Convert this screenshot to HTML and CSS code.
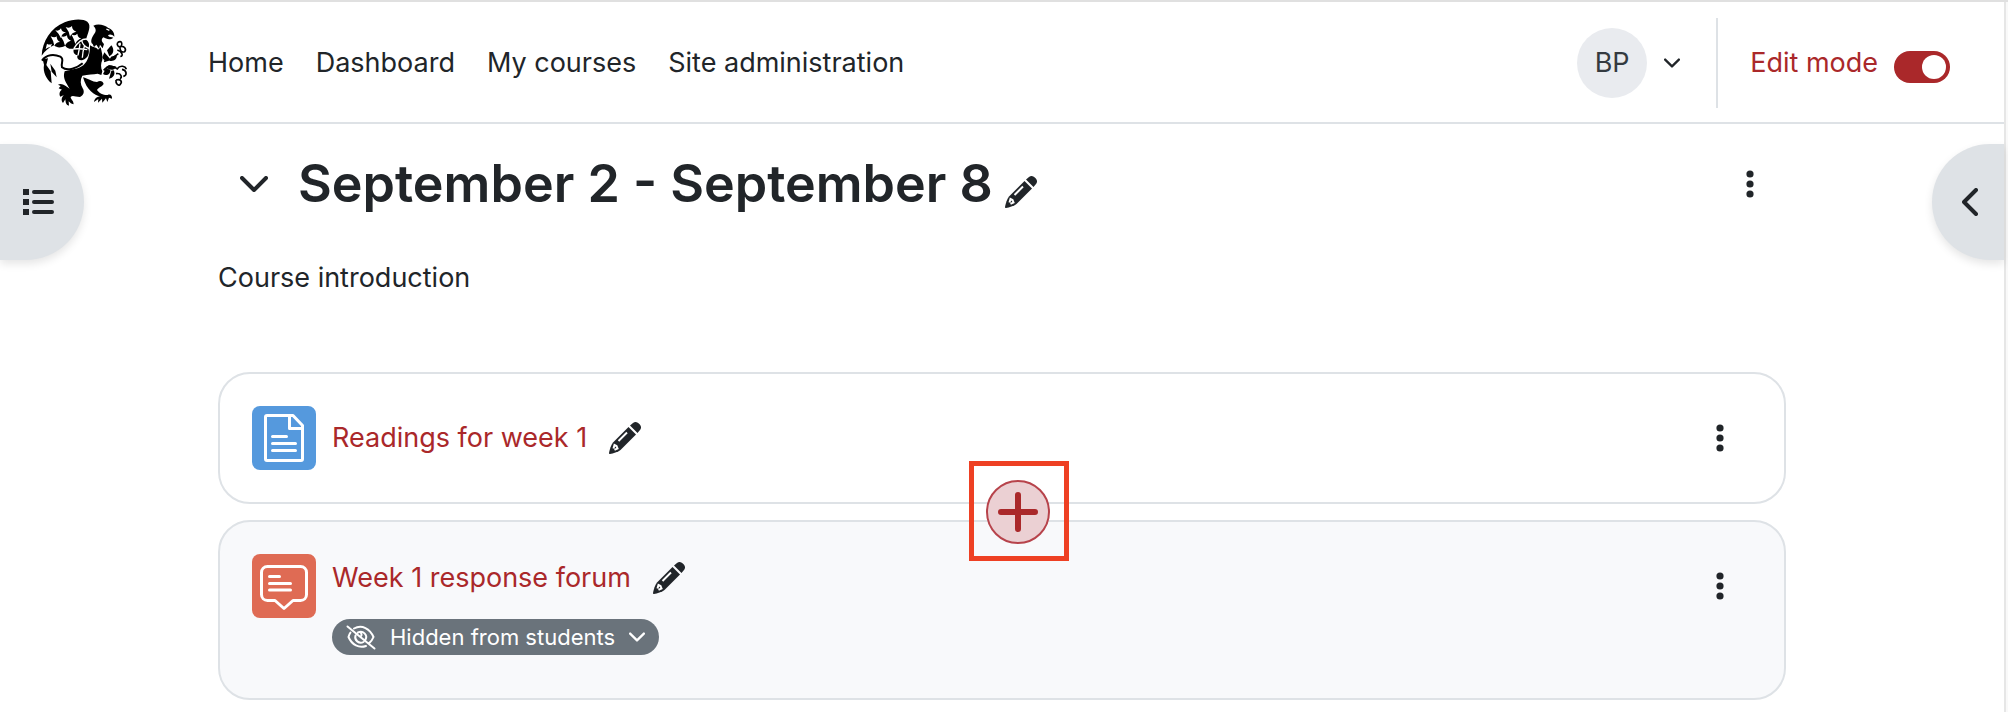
FILE: index.html
```html
<!DOCTYPE html>
<html lang="en">
<head>
    <meta charset="UTF-8">
    <meta name="viewport" content="width=device-width, initial-scale=1.0">
    <title>Course</title>
    <link rel="stylesheet" href="styles.css">
</head>
<body>
    <!-- shared icons -->
    <svg class="sprite" aria-hidden="true">
        <symbol id="pencil" viewBox="0 0 32 32">
            <path d="M19.500 5L27 12.500L11.500 28C9 30 4 31.500 1 32C.300 32 0 31.700 0 31C.500 28 2 23 4 20.500Z"/>
            <path d="M21 3.500L24 1C26 -.500 28 -.300 29.800 1.500L30.800 2.500C32.500 4.300 32.300 6.500 31 8L28.500 11Z"/>
            <path class="cut" d="M9.500 19L18 10.500M4.500 26.500L5.500 23L7.500 24L8.500 26.500L5.500 27.800"/>
        </symbol>
        <symbol id="kebab" viewBox="0 0 8 28">
            <circle cx="4" cy="4" r="3.600"/>
            <circle cx="4" cy="14" r="3.600"/>
            <circle cx="4" cy="24" r="3.600"/>
        </symbol>
        <symbol id="chevron" viewBox="0 0 28 16">
            <path d="M2 2L14 14L26 2"/>
        </symbol>
    </svg>

    <div class="page">
        <header class="header">
            <a class="logo" href="#" aria-label="Home page">
                <svg viewBox="0 0 330 315">
                    <path d="M35 134C37 92 62 50 104 34C132 23 160 24 172 32C186 44 173 66 168 86C178 92 180 104 174 112C181 124 174 143 158 147C145 150 139 140 143 132C132 132 128 121 132 113C119 115 109 111 106 104C93 111 81 111 72 103C57 109 45 120 35 134Z"/>
                    <path d="M190 44C205 37 224 42 235 51C246 54 254 65 253 77C247 70 238 69 234 73C236 79 245 79 250 80C240 89 228 84 221 79C213 83 214 92 222 99L218 112L210 101L207 113L199 101L192 108L188 99C179 94 186 78 194 67C201 57 195 49 190 44Z"/>
                    <path d="M180 103C191 111 200 108 204 116L212 109C215 123 219 134 217 147C212 157 212 170 217 181L214 192L203 188C190 190 175 190 157 194C150 207 151 220 158 232C165 243 160 254 150 258C136 258 128 252 122 258C122 266 130 266 131 280C123 279 121 275 116 271L117 284C108 283 107 275 106 265L99 276C92 268 95 258 102 252L91 257C86 249 89 240 96 236L86 232L92 225L84 221C96 214 109 226 119 233C108 215 97 201 104 181C121 176 145 175 160 163C174 151 180 130 180 103Z"/>
                    <path d="M159 199C174 203 188 213 201 213C211 207 219 211 221 219C217 226 204 231 201 237C207 247 222 253 233 252C241 248 247 254 246 263L237 260L232 273L228 262L217 275L216 263L204 275L205 264L192 273C194 261 202 257 210 256C194 253 170 239 159 199Z"/>
                    <path class="stroke" d="M36 149C49 130 72 129 91 137C105 145 91 157 96 169C112 182 142 171 158 157"/>
                    <path d="M38 145L54 142L49 162L62 181L65 217C49 204 38 183 42 161ZM61 158L76 179L80 199L65 182Z"/>
                    <path d="M244 103C254 116 251 129 238 136L231 118ZM223 124L240 143C231 151 219 150 217 139ZM243 137L260 132C263 144 250 153 238 149ZM237 162L259 167C250 182 235 176 228 168ZM228 171L219 189C230 198 243 187 241 177ZM244 179L237 203C249 202 258 190 251 178Z"/>
                    <path class="twig" d="M222 151L242 145L265 128M221 178C233 165 249 163 264 175M263 95C274 86 279 98 273 107C263 110 260 100 263 95M270 107C283 103 290 114 284 122C274 126 269 117 270 107M262 117C277 122 281 136 271 136M261 174C271 161 286 165 289 175M276 175C291 178 292 193 280 196M258 188C274 185 277 199 270 203M258 207C271 203 279 211 270 221C263 225 257 217 258 207"/>
                    <!-- feathers on the wing -->
                    <path class="gap" d="M76 58Q87 62 93 52Q95 64 108 64Q94 69 93 82Q88 69 76 58ZM107 48Q118 54 126 45Q126 58 139 62Q124 65 120 77Q118 62 107 48ZM62 76Q74 82 80 76Q80 88 90 93Q78 94 73 104Q71 90 62 76ZM92 76Q104 80 111 73Q111 85 123 89Q110 92 105 104Q102 90 92 76ZM124 70Q134 76 142 68Q143 80 154 82Q141 87 136 99Q132 84 124 70ZM51 98Q58 103 66 98L62 108Q55 108 47 114Z"/>
                    <path class="vein" d="M170 84Q150 83 132 112M155 88Q158 104 176 112M150 98Q148 116 144 133M164 102Q158 122 157 140M130 114Q148 112 172 116"/>
                    <path class="vein" d="M229 54L238 58"/>
                </svg>
            </a>
            <nav class="nav">
                <a href="#">Home</a>
                <a href="#">Dashboard</a>
                <a href="#">My courses</a>
                <a href="#">Site administration</a>
            </nav>
            <button class="user" type="button" aria-label="User menu">
                <span class="avatar">BP</span>
                <svg class="chevron small"><use href="#chevron"/></svg>
            </button>
            <div class="edit">
                <label for="editmode">Edit mode</label>
                <input class="switch" type="checkbox" role="switch" id="editmode" checked>
            </div>
        </header>

        <div class="content">
            <button class="drawer left" type="button" aria-label="Open course index">
                <svg class="list" viewBox="0 0 32 28">
                    <path d="M1 1h6v6H1zM1 11h6v6H1zM1 21h6v6H1z"/>
                    <path d="M12 4H30M12 14H30M12 24H30"/>
                </svg>
            </button>

            <main class="main">
                <div class="section-head">
                    <button class="icon-btn" type="button" aria-label="Collapse section">
                        <svg class="chevron"><use href="#chevron"/></svg>
                    </button>
                    <h1>September 2 - September 8</h1>
                    <button class="icon-btn pencil-btn" type="button" aria-label="Edit section name">
                        <svg class="pencil"><use href="#pencil"/></svg>
                    </button>
                    <button class="icon-btn more" type="button" aria-label="Section actions">
                        <svg class="kebab"><use href="#kebab"/></svg>
                    </button>
                </div>
                <p class="summary">Course introduction</p>

                <div class="activities">
                    <article class="card">
                        <div class="activity-icon page-icon">
                            <svg viewBox="0 0 64 64">
                                <path class="thick" d="M41 9.500H15C14.200 9.500 13.500 10.200 13.500 11V53C13.500 53.800 14.200 54.500 15 54.500H49C49.800 54.500 50.500 53.800 50.500 53V19.500ZM37.500 10V22.500H50"/>
                                <path class="thick" d="M20.500 30.500H34.500M20.500 37.500H43.500M20.500 44.500H43.500"/>
                            </svg>
                        </div>
                        <div class="activity">
                            <div class="name">
                                <a href="#">Readings for week 1</a>
                                <button class="icon-btn" type="button" aria-label="Edit title">
                                    <svg class="pencil"><use href="#pencil"/></svg>
                                </button>
                            </div>
                        </div>
                        <button class="icon-btn more" type="button" aria-label="Activity actions">
                            <svg class="kebab"><use href="#kebab"/></svg>
                        </button>
                    </article>

                    <div class="insert">
                        <button type="button" aria-label="Add content">
                            <svg viewBox="0 0 40 40"><path d="M20 3V37M3 20H37"/></svg>
                        </button>
                    </div>

                    <article class="card hidden">
                        <div class="activity-icon forum-icon">
                            <svg viewBox="0 0 64 64">
                                <path class="thick" d="M15.500 12.500H48.500C52 12.500 54.500 15 54.500 18.500V40.500C54.500 44 52 46.500 48.500 46.500H41L32 54.500L23 46.500H15.500C12 46.500 9.500 44 9.500 40.500V18.500C9.500 15 12 12.500 15.500 12.500Z"/>
                                <path class="thick" d="M17.500 22.500H27.500M17.500 29.500H38.500M17.500 36H38.500"/>
                            </svg>
                        </div>
                        <div class="activity">
                            <div class="name">
                                <a href="#">Week 1 response forum</a>
                                <button class="icon-btn" type="button" aria-label="Edit title">
                                    <svg class="pencil"><use href="#pencil"/></svg>
                                </button>
                            </div>
                            <button class="badge" type="button">
                                <svg class="eye" viewBox="0 0 30 26">
                                    <path d="M1.500 2.500L28.500 24.500M8 4.500C16 0 24 5 27.500 13C26.500 15.500 25.200 17.200 23.500 18.800M4.500 8.500C3.500 10 2.800 11.500 2.500 13C6 21 13 24.500 20 22M9.500 11.500C8 16 13 20.500 17.500 18M12 8.500C17 6 22 11 19.500 15.500M15 9C16 10.500 15.500 12 14.500 12.500"/>
                                </svg>
                                <span>Hidden from students</span>
                                <svg class="chevron small"><use href="#chevron"/></svg>
                            </button>
                        </div>
                        <button class="icon-btn more" type="button" aria-label="Activity actions">
                            <svg class="kebab"><use href="#kebab"/></svg>
                        </button>
                    </article>
                </div>
            </main>

            <button class="drawer right" type="button" aria-label="Open block drawer">
                <svg class="chevron"><use href="#chevron"/></svg>
            </button>
        </div>
    </div>
</body>
</html>
```
FILE: styles.css
```css
* {
    padding: 0;
    margin: 0;
    box-sizing: border-box;
}

body {
    font-family: Inter, "Liberation Sans", sans-serif;
    font-size: 27px;
    line-height: 40px;
    color: #212529;
    background: #f9f9f9;
    border-top: 2px solid #e0e0e0;
}

a {
    color: inherit;
    text-decoration: none;
}

button {
    font: inherit;
    color: inherit;
    background: none;
    border: 0;
    cursor: pointer;
}

svg {
    display: block;
    fill: currentColor;
}

.sprite {
    position: absolute;
    width: 0;
    height: 0;
}

.page {
    min-height: calc(100vh - 2px);
    margin-right: 2px;
    background: #fff;
    border-right: 2px solid #e6e6e6;
}

/* header */
.header {
    display: flex;
    align-items: center;
    height: 122px;
    padding: 2px 54px 0 30px;
    border-bottom: 2px solid #dee2e6;
}

.logo svg {
    width: 110px;
    height: 105px;
    color: #000;
}

.logo .stroke,
.logo .twig {
    fill: none;
    stroke: #000;
    stroke-width: 6;
}

.logo .twig {
    stroke-width: 5;
}

.logo .gap {
    fill: #fff;
}

.logo .vein {
    fill: none;
    stroke: #fff;
    stroke-width: 4;
}

.nav {
    display: flex;
    flex: 1;
    gap: 32px;
    padding-left: 68px;
}

.user {
    display: flex;
    align-items: center;
    gap: 17px;
    padding-right: 36px;
}

.avatar {
    width: 70px;
    height: 70px;
    line-height: 70px;
    color: #343a40;
    background: #e9ebef;
    border-radius: 50%;
}

.edit {
    display: flex;
    align-items: center;
    gap: 16px;
    height: 90px;
    padding-left: 32px;
    color: #aa282a;
    border-left: 2px solid #dee2e6;
}

.switch {
    appearance: none;
    width: 56px;
    height: 32px;
    margin-top: 8px;
    background: #aa282a;
    border-radius: 16px;
}

.switch::before {
    content: "";
    display: block;
    width: 24px;
    height: 24px;
    margin: 4px 4px 4px auto;
    background: #fff;
    border-radius: 50%;
}

/* icons */
.chevron {
    width: 28px;
    height: 16px;
    fill: none;
    stroke: currentColor;
    stroke-width: 4;
    stroke-linecap: round;
    stroke-linejoin: round;
}

.chevron.small {
    width: 16px;
    height: 10px;
}

.pencil {
    width: 32px;
    height: 32px;
}

.cut {
    fill: none;
    stroke: #fff;
    stroke-width: 2;
}

.kebab {
    width: 8px;
    height: 28px;
}

.more {
    margin-left: auto;
}

/* course */
.content {
    display: flex;
    align-items: flex-start;
    padding-top: 20px;
}

.drawer {
    display: flex;
    align-items: center;
    height: 116px;
    background: #dee2e6;
    box-shadow: 0 4px 8px rgba(0, 0, 0, .1);
}

.drawer.left {
    width: 84px;
    padding-left: 22px;
    border-radius: 0 58px 58px 0;
}

.drawer.right {
    width: 72px;
    padding-left: 24px;
    border-radius: 58px 0 0 58px;
}

.drawer.right .chevron {
    transform: rotate(90deg);
}

.list {
    width: 32px;
    height: 28px;
    stroke: currentColor;
    stroke-width: 4;
    stroke-linecap: round;
}

.list path:first-child {
    stroke: none;
}

.main {
    flex: 1;
    padding: 0 146px 12px 134px;
}

.section-head {
    display: flex;
    align-items: center;
    height: 80px;
    padding: 0 32px 0 22px;
}

.section-head h1 {
    padding: 0 12px 0 30px;
    font-size: 52px;
    font-weight: 600;
    line-height: 64px;
}

.pencil-btn {
    padding-top: 16px;
}

.summary {
    margin: 34px 0 74px;
}

.activities {
    position: relative;
    display: flex;
    flex-direction: column;
    gap: 16px;
}

.card {
    display: flex;
    align-items: flex-start;
    gap: 16px;
    min-height: 132px;
    padding: 32px;
    background: #fff;
    border: 2px solid #dee2e6;
    border-radius: 32px;
}

.card.hidden {
    min-height: 180px;
    background: #f8f9fb;
}

.activity-icon {
    width: 64px;
    height: 64px;
    color: #fff;
    border-radius: 8px;
}

.page-icon {
    background: #5599dd;
}

.forum-icon {
    background: #df6b54;
}

.thick {
    fill: none;
    stroke: currentColor;
    stroke-width: 3;
    stroke-linecap: round;
    stroke-linejoin: round;
}

.name {
    display: flex;
    align-items: center;
    gap: 22px;
    min-height: 64px;
    color: #aa282a;
}

.name .icon-btn {
    color: #212529;
}

.hidden .name {
    min-height: 48px;
}

.card .more {
    padding: 18px 28px;
}

.badge {
    display: flex;
    align-items: center;
    gap: 14px;
    height: 36px;
    margin-top: 17px;
    padding: 0 14px;
    font-size: 22px;
    color: #fff;
    background: #6a737b;
    border-radius: 18px;
}

.eye {
    width: 30px;
    height: 26px;
    fill: none;
    stroke: currentColor;
    stroke-width: 2;
    stroke-linecap: round;
}

/* add button sits over the gap between two cards */
.insert {
    position: absolute;
    top: 89px;
    left: calc(50% - 33px);
    padding: 14px 14px 12px 12px;
    border: 5px solid #ee4023;
}

.insert button {
    display: flex;
    align-items: center;
    justify-content: center;
    width: 64px;
    height: 64px;
    color: #aa282a;
    background: #ebd0d3;
    border: 2px solid #b7434b;
    border-radius: 50%;
}

.insert svg {
    width: 40px;
    height: 40px;
    stroke: currentColor;
    stroke-width: 6;
    stroke-linecap: round;
}
```
